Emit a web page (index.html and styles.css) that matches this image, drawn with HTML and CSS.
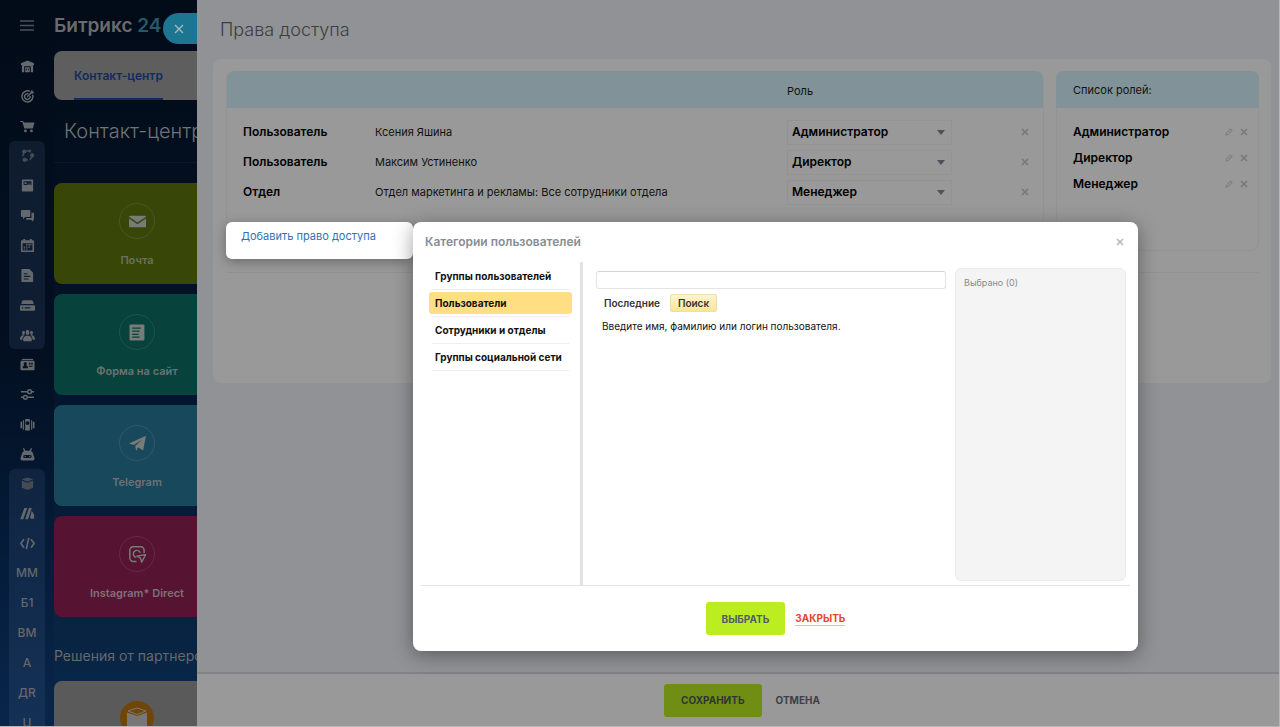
FILE: index.html
```
<!DOCTYPE html>
<html lang="ru">
<head>
<meta charset="utf-8">
<title>Права доступа</title>
<link rel="stylesheet" href="styles.css">
</head>
<body>
<svg class="defs" aria-hidden="true">
  <symbol id="x" viewBox="0 0 8 8"><path d="M1 1l6 6M7 1L1 7" fill="none" stroke="currentColor" stroke-width="1.7"/></symbol>
  <symbol id="pen" viewBox="0 0 8 8"><path d="M1 7l.6-2.2L5.600.9 7.100 2.400 3.200 6.400z" fill="none" stroke="currentColor" stroke-width="1.100"/></symbol>
  <symbol id="arrow" viewBox="0 0 8 5"><path d="M0 0h8L4 5z" fill="currentColor"/></symbol>
</svg>
<div class="app">
  <nav class="rail" aria-label="Главное меню">
    <button class="burger" aria-label="Меню"><svg viewBox="0 0 14 11"><path d="M0 1h14M0 5.500h14M0 10h14" stroke="currentColor" stroke-width="1.3"/></svg></button>
    <div class="group">
      <a href="#" aria-label="Главная"><svg viewBox="0 0 16 16"><path d="M8 1.500L1 4.400v2h1V14h2.500V7.700h7V14H14V6.400h1v-2z"/><path fill-rule="evenodd" d="M5.500 8.700h5V14h-5zM6.300 10.500h1V12h-1zm2.400 0h1V12h-1z"/></svg></a>
      <a href="#" aria-label="Цели"><svg class="line" viewBox="0 0 16 16"><path d="M10.500 2.600A5.900 5.900 0 1 0 13.500 6M9 5.300A3 3 0 1 0 10.800 7.500" stroke-width="1.6"/><path d="M7.800 8.300l4-4" stroke-width="1.5"/><path d="M11 2.800l2-2 .5 1.800 1.900.5-2 2-1.800-.4z" fill="currentColor" stroke="none"/></svg></a>
      <a href="#" aria-label="Магазин"><svg viewBox="0 0 16 16"><path d="M.3 2h3l.7 1.700h11.500L13.700 10H4.600L2.500 3.300H.3z"/><circle cx="5.800" cy="12.700" r="1.500"/><circle cx="12.200" cy="12.700" r="1.500"/></svg></a>
    </div>
    <div class="group shaded">
      <a class="dim" href="#" aria-label="Совместная работа"><svg class="line" viewBox="0 0 16 16"><circle cx="8" cy="8" r="4.900" stroke-width="1.600" stroke-dasharray="5 2"/><g fill="currentColor" stroke="none"><circle cx="4.500" cy="3.800" r="2.300"/><circle cx="13" cy="8" r="2.300"/><circle cx="5" cy="12.700" r="2.300"/><circle cx="10.500" cy="3" r="1.500"/></g></svg></a>
      <a href="#" aria-label="Лента"><svg viewBox="0 0 16 16"><path fill-rule="evenodd" d="M3 1.500h10a1 1 0 0 1 1 1v11a1 1 0 0 1-1 1H3a1 1 0 0 1-1-1v-11a1 1 0 0 1 1-1zm.8 2v4h8.400v-4zm1 1H7v1.800H4.800zM8 6h3.500v.8H8z"/></svg></a>
      <a href="#" aria-label="Чаты"><svg viewBox="0 0 16 16"><path d="M2 2h8a1 1 0 0 1 1 1v5.500a1 1 0 0 1-1 1H5.500L3.200 12V9.500H2a1 1 0 0 1-1-1V3a1 1 0 0 1 1-1z"/><path d="M12.200 5H14a1 1 0 0 1 1 1v5.500a1 1 0 0 1-1 1v2.200l-2.200-2.200H7.500a1 1 0 0 1-1-1v-.8h5.700z"/></svg></a>
      <a href="#" aria-label="Календарь"><svg viewBox="0 0 16 16"><path fill-rule="evenodd" d="M3.500 2.500V1h2v1.500h5V1h2v1.500H14a1 1 0 0 1 1 1V14a1 1 0 0 1-1 1H2a1 1 0 0 1-1-1V3.500a1 1 0 0 1 1-1zM2.700 5.500v7.800h10.600V5.500z"/><path d="M6.500 6.500H8V8H6.500zM9 6.500h1.500V8H9zM4 9h1.500v1.500H4zM6.500 9H8v1.500H6.500zM9 9h1.500v1.500H9zM4 11.300h1.500v1H4zM6.500 11.300H8v1H6.500zM11 6.500h1.200V8H11z"/></svg></a>
      <a href="#" aria-label="Документы"><svg viewBox="0 0 16 16"><path fill-rule="evenodd" d="M2.500 1H10l4 4v9a1 1 0 0 1-1 1H2.500a1 1 0 0 1-1-1V2a1 1 0 0 1 1-1zM4 5.500v1.200h4V5.500zm0 2.800v1.200h7V8.300zm0 2.800v1.200h5v-1.200z"/></svg></a>
      <a href="#" aria-label="Диск"><svg viewBox="0 0 16 16"><path d="M4 2.500h8a2 2 0 0 1 2 1.500l.7 2.500H1.300L2 4a2 2 0 0 1 2-1.500z"/><path fill-rule="evenodd" d="M1 7.700h14a1 1 0 0 1 1 1v3.800a1 1 0 0 1-1 1H1a1 1 0 0 1-1-1V8.700a1 1 0 0 1 1-1zM2 9.900v1.300h1.600V9.900zm3 0v1.300h6V9.900z"/></svg></a>
      <a href="#" aria-label="Группы"><svg viewBox="0 0 16 16"><ellipse cx="8" cy="4.600" rx="2" ry="2.800"/><ellipse cx="3.700" cy="5.200" rx="1.500" ry="2.200"/><ellipse cx="12.300" cy="5.200" rx="1.500" ry="2.200"/><path d="M3.500 14v-2.500C3.500 9.700 5.300 9 6.500 8.300h3c1.200.7 3 1.400 3 3.200V14zM0 12.500c0-2.500.7-3.700 2.500-4.700h2.400C3.200 9.300 2.600 10.500 2.600 12.500zM16 12.500c0-2.500-.7-3.700-2.500-4.700h-2.400c1.700 1.500 2.300 2.700 2.300 4.700z"/></svg></a>
    </div>
    <div class="group">
      <a href="#" aria-label="CRM"><svg viewBox="0 0 16 16"><path d="M2 2h12v1.300H2z"/><path fill-rule="evenodd" d="M1.500 4h13a1 1 0 0 1 1 1v8a1 1 0 0 1-1 1h-13a1 1 0 0 1-1-1V5a1 1 0 0 1 1-1zM5.500 5.500a1.600 1.800 0 0 0-.9 3.300L3 10.200V12h5.300v-1.800L6.500 8.800a1.600 1.800 0 0 0-1-3.300zM9.500 6v2h1.600V6zM12 6v2h1.600V6zM9.500 9.200v1.200h4V9.200z"/></svg></a>
      <a href="#" aria-label="Настройки"><svg class="line" viewBox="0 0 16 16"><path d="M1 5h7M12.500 5H15M1 11h2.500M8 11h7" stroke-width="1.500"/><circle cx="10.200" cy="5" r="2" stroke-width="1.500"/><circle cx="5.700" cy="11" r="2" stroke-width="1.500"/></svg></a>
      <a href="#" aria-label="Компания"><svg viewBox="0 0 16 16"><path d="M.5 5h1.800v7H.5zM13.700 5h1.800v7h-1.800zM3 3.500h1.200v10H3zM11.800 3.500H13v10h-1.200z"/><path fill-rule="evenodd" d="M5.500 2h5v12.500h-5zM8 4.500a2 2 0 1 0 0 4 2 2 0 0 0 0-4z"/></svg></a>
      <a href="#" aria-label="Роботы"><svg viewBox="0 0 16 16"><path d="M3.200 1.600l1-.5L6 4h4l1.800-2.900 1 .5-1 3C13.300 5.400 14 6.300 14 8H2c0-1.700.7-2.600 2.200-3.400z"/><path fill-rule="evenodd" d="M2 7.500h12l1.500 4.500c0 1.500-1 2.500-2.500 2.500H3C1.500 14.500.5 13.500.5 12zM5 8.500c-2 0-2 3.200 0 3.200h6c2 0 2-3.200 0-3.200zm.5 1a.7.7 0 1 1 0 1.400.7.700 0 0 1 0-1.400zm5 0a.7.7 0 1 1 0 1.400.7.700 0 0 1 0-1.400z"/></svg></a>
    </div>
    <div class="group shaded tall">
      <a class="dim" href="#" aria-label="Маркет"><svg viewBox="0 0 16 16"><path d="M8 1.500l6 2-6 2.600-6-2.600zM2 4.700l5.700 2.500h.6L14 4.700v7.800l-6 2.500-6-2.500z"/></svg></a>
      <a href="#" aria-label="Маркетинг"><svg viewBox="0 0 16 16"><path d="M4.600 2h3.200L3.500 14H.3zM9.600 2h3L8.500 14h-3zM12.500 5l2.600 4v4.500h-3.400l-1-1z"/></svg></a>
      <a href="#" aria-label="Разработчикам"><svg class="line" viewBox="0 0 16 16"><path d="M4.300 3.500L.9 8l3.400 4.500M11.700 3.500L15.100 8l-3.400 4.500M9.300 2L6.700 14" stroke-width="1.800"/></svg></a>
      <a href="#">ММ</a><a href="#">Б1</a><a href="#">ВМ</a><a href="#">А</a><a href="#">ДR</a><a href="#">U</a>
    </div>
  </nav>

  <section class="center">
    <div class="brand">Битрикс <span>24</span></div>
    <div class="tabs"><a href="#">Контакт-центр</a></div>
    <h2>Контакт-центр</h2>
    <div class="tiles">
      <a class="tile mail" href="#"><span class="disc"><svg viewBox="0 0 16 16"><path d="M0 3.500A1 1 0 0 1 1 2.500h14a1 1 0 0 1 1 1L8 9z"/><path d="M0 5.200l8 5.500 8-5.500V12.500a1 1 0 0 1-1 1H1a1 1 0 0 1-1-1z"/></svg></span>Почта</a>
      <a class="tile form" href="#"><span class="disc"><svg viewBox="0 0 16 16"><path fill-rule="evenodd" d="M1.500.5h12a1 1 0 0 1 1 1v13a1 1 0 0 1-1 1h-12a1 1 0 0 1-1-1v-13a1 1 0 0 1 1-1zM3 3.200v1.200h8V3.200zm0 3v1.200h7V6.200zm0 3v1.200h6V9.200zm0 2.500v1.200h7v-1.200z"/></svg></span>Форма на сайт</a>
      <a class="tile tg" href="#"><span class="disc"><svg viewBox="0 0 16 16"><path d="M0 8L16 .8 13.300 14.500 8.500 11.500 6.800 15 5.800 10.300 12.500 4.200 4.500 9.500z"/></svg></span>Telegram</a>
      <a class="tile ig" href="#"><span class="disc"><svg class="line" viewBox="0 0 16 16"><path d="M7 14.500H4A3.200 3.200 0 0 1 .8 11.300V4A3.200 3.200 0 0 1 4 .8h7A3.200 3.200 0 0 1 14.200 4v2.500" stroke-width="1.400"/><path d="M7 10.700A3.300 3.300 0 1 1 10.600 6.500" stroke-width="1.300"/><path d="M7.800 9.500l8-1.500-3.800 7-1.200-3.500z" stroke-width="1.300"/></svg></span>Instagram* Direct</a>
    </div>
    <h3>Решения от партнеров</h3>
    <a class="tile partner" href="#" aria-label="Маркетплейс"><span class="coin"><svg viewBox="0 0 34 34"><circle cx="17" cy="17" r="17" fill="#704607"/><path d="M17 7l9 3-9 3.500L8 10z" fill="#704607" stroke="#777" stroke-width="1"/><path d="M7 11.500l10 3.500 10-3.500V25l-10 4-10-4z" fill="#777"/></svg></span></a>
  </section>

  <main class="drawer">
    <button class="drawer-close" aria-label="Закрыть панель"><svg viewBox="0 0 10 10"><path d="M1 1l8 8M9 1L1 9" stroke="currentColor" stroke-width="1.4"/></svg></button>
    <h1>Права доступа</h1>
    <div class="sheet">
      <div class="columns">
        <section class="card rights">
          <table>
            <thead><tr><th class="kind"></th><th class="who"></th><th class="role">Роль</th><th class="act"></th></tr></thead>
            <tbody>
              <tr><td><b>Пользователь</b></td><td>Ксения Яшина</td><td><label class="pick"><select aria-label="Роль: Ксения Яшина"><option>Администратор</option><option>Директор</option><option>Менеджер</option></select><svg><use href="#arrow"/></svg></label></td><td><button class="ico" aria-label="Удалить"><svg><use href="#x"/></svg></button></td></tr>
              <tr><td><b>Пользователь</b></td><td>Максим Устиненко</td><td><label class="pick"><select aria-label="Роль: Максим Устиненко"><option>Директор</option><option>Администратор</option><option>Менеджер</option></select><svg><use href="#arrow"/></svg></label></td><td><button class="ico" aria-label="Удалить"><svg><use href="#x"/></svg></button></td></tr>
              <tr><td><b>Отдел</b></td><td>Отдел маркетинга и рекламы: Все сотрудники отдела</td><td><label class="pick"><select aria-label="Роль: Отдел маркетинга"><option>Менеджер</option><option>Администратор</option><option>Директор</option></select><svg><use href="#arrow"/></svg></label></td><td><button class="ico" aria-label="Удалить"><svg><use href="#x"/></svg></button></td></tr>
            </tbody>
          </table>
          <div class="spot"><a href="#">Добавить право доступа</a></div>
        </section>
        <section class="card roles">
          <h4>Список ролей:</h4>
          <ul>
            <li><b>Администратор</b><button class="ico pen" aria-label="Изменить"><svg><use href="#pen"/></svg></button><button class="ico" aria-label="Удалить"><svg><use href="#x"/></svg></button></li>
            <li><b>Директор</b><button class="ico pen" aria-label="Изменить"><svg><use href="#pen"/></svg></button><button class="ico" aria-label="Удалить"><svg><use href="#x"/></svg></button></li>
            <li><b>Менеджер</b><button class="ico pen" aria-label="Изменить"><svg><use href="#pen"/></svg></button><button class="ico" aria-label="Удалить"><svg><use href="#x"/></svg></button></li>
          </ul>
        </section>
      </div>
      <hr>
    </div>
    <footer class="bar"><button class="btn save">СОХРАНИТЬ</button><button class="plain">ОТМЕНА</button></footer>
  </main>
</div>

<div class="dialog" role="dialog" aria-labelledby="dialog-title">
  <header><h2 id="dialog-title">Категории пользователей</h2><button class="ico" aria-label="Закрыть"><svg><use href="#x"/></svg></button></header>
  <div class="dialog-body">
    <nav class="cats">
      <a href="#">Группы пользователей</a>
      <a class="active" href="#">Пользователи</a>
      <a href="#">Сотрудники и отделы</a>
      <a href="#">Группы социальной сети</a>
    </nav>
    <div class="finder">
      <input type="text" aria-label="Поиск пользователя">
      <div class="modes"><button>Последние</button><button class="on">Поиск</button></div>
      <p>Введите имя, фамилию или логин пользователя.</p>
    </div>
    <aside class="chosen">Выбрано (0)</aside>
  </div>
  <footer><button class="btn">ВЫБРАТЬ</button><button class="close">ЗАКРЫТЬ</button></footer>
</div>
</body>
</html>
```
FILE: styles.css
```
* { box-sizing: border-box; }
body {
  margin: 0;
  overflow: hidden;
  background: #b5b6b8;
  font: 12px/16px Inter, "Noto Sans", sans-serif;
  color: #111;
}
a { color: inherit; text-decoration: none; }
button { padding: 0; border: 0; background: none; color: inherit; font: inherit; }
h1, h2, h3, h4, p, ul { margin: 0; padding: 0; font-weight: 400; }
svg { display: block; fill: currentColor; }
svg.line { fill: none; stroke: currentColor; }
.defs { position: absolute; width: 0; height: 0; }

.app {
  display: flex;
  height: 100vh;
  padding: 0 1px 1px 0;
  overflow: hidden;
}

/* Left rail */
.rail {
  flex: none;
  display: flex;
  flex-direction: column;
  gap: 1px;
  width: 54px;
  padding: 0 9px;
  overflow: hidden;
  background: linear-gradient(#020b18, #031022 50%, #041a36 72%, #09264a);
  color: #6b7078;
}
.burger { display: flex; flex: none; align-items: center; justify-content: center; height: 51px; }
.burger svg { width: 14px; height: 11px; color: #4b515a; }
.group { display: flex; flex: none; flex-direction: column; gap: 2px; width: 36px; border-radius: 6px; }
.group a { display: flex; align-items: center; justify-content: center; height: 28px; color: #64676c; font-weight: 500; }
.group a.dim { color: #454b54; }
.group svg { width: 15px; height: 15px; }
.shaded { background: rgba(90, 120, 160, .14); }

/* Contact center */
.center {
  flex: none;
  width: 143px;
  overflow: hidden;
  background: linear-gradient(#020b18, #031022 35%, #041733 62%, #082340 85%, #08284c);
  color: #66696d;
}
.brand { padding-top: 12px; font-size: 19px; line-height: 28px; font-weight: 600; white-space: nowrap; color: #6a6b6c; }
.brand span { color: #245a6e; }
.tabs { display: flex; height: 49px; margin-top: 11px; padding-left: 20px; border-radius: 8px 0 0 8px; background: #5e5e5e; }
.tabs a { height: 49px; border-bottom: 2px solid #122c60; color: #122c60; font-weight: 600; line-height: 49px; white-space: nowrap; }
.center h2 { margin-bottom: 20px; padding: 17px 0 17px 10px; border-bottom: 1px solid #0a1728; font-size: 20px; line-height: 28px; font-weight: 300; white-space: nowrap; color: #707378; }
.tiles { display: grid; gap: 10px; }
.tile {
  display: flex;
  flex-direction: column;
  align-items: center;
  gap: 13px;
  width: 166px;
  height: 101px;
  padding-top: 20px;
  border-radius: 8px;
  color: #6d7271;
  font-size: 11px;
  font-weight: 600;
}
.mail { background: #384608; color: #6b715a; }
.form { background: #07423c; }
.tg { background: #18485c; }
.ig { background: #561432; color: #80707a; }
.disc { display: grid; place-items: center; flex: none; width: 36px; height: 36px; border: 1px solid rgba(255, 255, 255, .09); border-radius: 50%; color: #787b78; }
.disc svg { width: 17px; height: 17px; }
.center h3 { margin: 28px 0 15px; font-size: 14px; line-height: 21px; white-space: nowrap; }
.partner { background: #5a5a5a; }
.coin svg { width: 34px; height: 34px; }

/* Slide-out panel */
.drawer {
  position: relative;
  flex: 1;
  display: flex;
  flex-direction: column;
  min-width: 0;
  background: #909295;
}
.drawer-close {
  position: absolute;
  top: 13px;
  right: 100%;
  display: grid;
  place-items: center;
  width: 34px;
  height: 31px;
  padding-right: 2px;
  border-radius: 16px 0 0 16px;
  background: #1c7591;
  color: #a9b6ba;
}
.drawer-close svg { width: 10px; height: 10px; }
.drawer h1 { padding: 16px 23px 15px; font-size: 18px; line-height: 28px; font-weight: 300; color: #3b3e42; }
.sheet { min-height: 324px; margin: 0 8px 0 16px; padding: 12px 12px 0 13px; border-radius: 8px; background: #999; }
.columns { display: flex; gap: 12px; }
.card { display: flex; flex-direction: column; border: 1px solid #929494; border-top: 0; border-radius: 8px; min-height: 180px; }
.rights { flex: 1; }
.roles { flex: 0 0 203px; }
.sheet hr { height: 1px; margin: 21px 0 0; border: 0; background: #929292; }

table { width: 100%; border-collapse: collapse; table-layout: fixed; font-size: 11px; }
th { height: 37px; padding: 2px 0 0; background: #819298; font-weight: 400; text-align: left; }
th.kind { width: 148px; border-radius: 8px 0 0; }
th.role { width: 212px; }
th.act { width: 44px; border-radius: 0 8px 0 0; }
tbody::before { content: ""; display: block; height: 9px; }
td { height: 30px; padding: 0; vertical-align: middle; white-space: nowrap; }
td:first-child { padding-left: 16px; }
td:last-child { padding-left: 22px; }
b { font-size: 12px; font-weight: 600; color: #000; }
.pick { display: flex; align-items: center; position: relative; width: 165px; }
.pick select {
  width: 100%;
  height: 25px;
  padding: 0 4px;
  border: 1px solid #929394;
  border-radius: 1px;
  appearance: none;
  background: none;
  font: 600 12px/16px Inter, sans-serif;
  color: #000;
}
.pick svg { position: absolute; right: 7px; width: 8px; height: 5px; color: #4e5359; pointer-events: none; }
.ico { display: grid; place-items: center; width: 8px; height: 8px; color: #78797b; }
.ico svg { width: 8px; height: 8px; }
.spot {
  width: 187px;
  height: 37px;
  margin: 15px 0 -9px -1px;
  padding: 6px 15px;
  border-radius: 6px;
  background: #fff;
  box-shadow: 0 3px 12px rgba(0, 0, 0, .3);
  font-size: 11px;
  color: #2f72b8;
  white-space: nowrap;
}

.roles h4 { height: 37px; margin: 0 -1px; padding-left: 17px; border-radius: 8px 8px 0 0; background: #819298; font-size: 11px; line-height: 39px; }
.roles ul { padding: 11px 10px 0 16px; list-style: none; }
.roles li { display: flex; align-items: center; gap: 7px; height: 26px; }
.roles b { flex: 1; }
.roles .pen { color: #808183; }

.bar { display: flex; align-items: center; justify-content: center; gap: 14px; height: 54px; margin-top: auto; padding-left: 8px; border-top: 2px solid #828386; background: #999; }
.btn { height: 33px; padding: 0 16px; border-radius: 3px; background: #bbed21; color: #535c69; font-size: 10px; font-weight: 700; }
.save { padding: 0 17px; background: #708e14; color: #2e353a; }
.plain { font-size: 10px; font-weight: 700; color: #3c4148; }

/* User picker */
.dialog {
  position: absolute;
  top: 222px;
  left: 413px;
  display: flex;
  flex-direction: column;
  width: 725px;
  padding: 0 8px;
  border-radius: 8px;
  background: #fff;
  box-shadow: 0 4px 20px rgba(0, 0, 0, .38);
  font-size: 10px;
}
.dialog header { display: flex; align-items: center; justify-content: space-between; height: 40px; padding: 0 6px 0 4px; }
.dialog header h2 { font-size: 12px; font-weight: 600; color: #868d95; }
.dialog header .ico { color: #b7bbc0; }
.dialog-body { display: flex; height: 324px; border-bottom: 1px solid #e4e4e4; }
.cats { flex: 0 0 162px; padding: 3px 8px 0; border-right: 3px solid #e2e2e2; font-weight: 700; }
.cats a { display: block; height: 22px; margin-bottom: 5px; padding: 0 6px; border-radius: 3px; line-height: 22px; position: relative; white-space: nowrap; }
.cats a::after { content: ""; position: absolute; left: 3px; right: 3px; bottom: -3px; height: 1px; background: #eee; }
.cats .active { background: #ffde84; }
.finder { flex: 1; padding: 9px 9px 0 13px; }
.finder input { display: block; width: 100%; height: 18px; border: 1px solid #e4e4e4; border-top-color: #d4d4d4; border-radius: 3px; font: inherit; }
.modes { display: flex; gap: 2px; margin-top: 5px; }
.modes button { height: 18px; padding: 0 8px; border-radius: 2px; font-weight: 600; color: #333; }
.modes .on { border: 1px solid #ecdcae; background: linear-gradient(#fff4d0, #fde495); padding: 0 7px; }
.finder p { margin-top: 6px; padding-left: 6px; }
.chosen { flex: 0 0 171px; margin: 6px 4px 4px 0; padding: 6px 8px; border: 1px solid #ececec; border-radius: 6px; background: #f4f4f4; color: #8b8b8b; font-size: 9px; }
.dialog footer { display: flex; align-items: center; justify-content: center; gap: 10px; height: 65px; }
.close { border-bottom: 1px solid #f5b5a8; font-size: 10px; line-height: 14px; font-weight: 700; color: #e8442f; }
```
